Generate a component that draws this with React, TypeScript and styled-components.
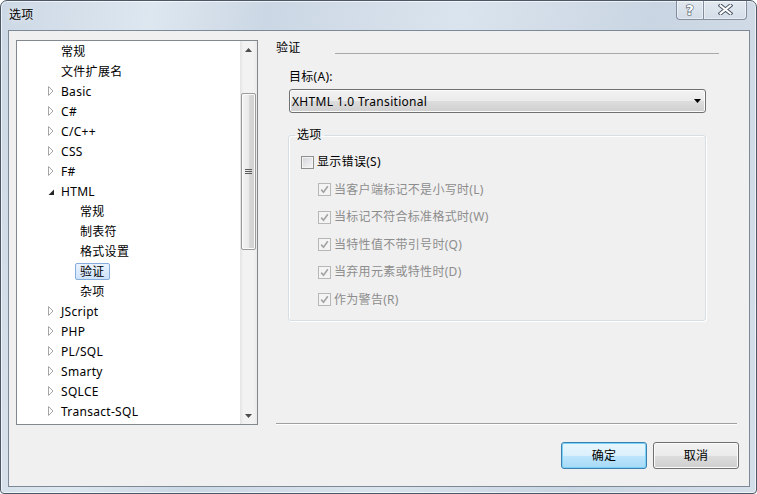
import React from 'react';
import styled, { createGlobalStyle } from 'styled-components';

const Global = createGlobalStyle`
  html, body { margin: 0; padding: 0; background: #ffffff; }
  body {
    font-family: "Noto Sans", "Noto Sans CJK SC", sans-serif;
    font-size: 12px;
    letter-spacing: 0.3px;
    color: #000;
  }
  * { box-sizing: border-box; }
`;

const Window = styled.div`
  width: 757px;
  height: 494px;
  border: 1px solid #4d5866;
  border-radius: 7px 7px 4px 4px;
  background: linear-gradient(100deg, #ccd8e5 0%, #dde7f0 18%, #cbd7e4 32%, #dae4ee 55%, #c9d5e2 78%, #d5dfea 100%);
  box-shadow: inset 0 0 0 1px rgba(255, 255, 255, 0.65);
  padding: 0 6px 6px 7px;
  display: flex;
  flex-direction: column;
  overflow: hidden;
`;

const TitleBar = styled.div`
  height: 29px;
  display: flex;
  justify-content: space-between;
  align-items: flex-start;
`;

const Title = styled.div`
  padding-left: 1px;
  line-height: 28px;
  font-size: 12px;
  color: #000;
  text-shadow: 0 0 6px rgba(255, 255, 255, 0.9);
`;

const CaptionGroup = styled.div`
  display: flex;
  margin-right: 3px;
  margin-top: -1px;
`;

const CaptionButton = styled.div<{ $w: number; $side: 'left' | 'right' }>`
  width: ${p => p.$w}px;
  height: 20px;
  border: 1px solid rgba(70, 85, 105, 0.6);
  border-top: none;
  ${p => (p.$side === 'left' ? 'border-right: none;' : '')}
  border-radius: ${p => (p.$side === 'left' ? '0 0 0 4px' : '0 0 4px 0')};
  background: linear-gradient(rgba(255, 255, 255, 0.45), rgba(255, 255, 255, 0.15));
  box-shadow: inset 0 0 0 1px rgba(255, 255, 255, 0.45);
  display: flex;
  align-items: center;
  justify-content: center;
`;

const Client = styled.div`
  flex: 1;
  border: 1px solid #7d8997;
  background: #f0f0f0;
  display: flex;
  flex-direction: column;
`;

const Main = styled.div`
  display: flex;
  gap: 18px;
  padding: 9px 12px 0 7px;
`;

const Tree = styled.div`
  width: 242px;
  height: 385px;
  border: 1px solid #828790;
  background: #fff;
  display: flex;
`;

const TreeList = styled.div`
  flex: 1;
  display: flex;
  flex-direction: column;
`;

const TreeRow = styled.div<{ $indent: number }>`
  height: 20px;
  display: flex;
  align-items: center;
  padding-left: ${p => p.$indent}px;
`;

const Expander = styled.span`
  width: 8px;
  height: 20px;
  display: flex;
  align-items: center;
`;

const TreeLabel = styled.span<{ $selected?: boolean }>`
  border: 1px solid ${p => (p.$selected ? '#84acdd' : 'transparent')};
  border-radius: 2px;
  padding: 0 4px;
  line-height: 15px;
  white-space: nowrap;
  background: ${p => (p.$selected ? 'linear-gradient(#eaf3fd, #cfe3fc)' : 'transparent')};
`;

const ScrollBar = styled.div`
  width: 17px;
  display: flex;
  flex-direction: column;
  background: linear-gradient(90deg, #e3e3e3 0%, #f2f2f2 20%, #f2f2f2 80%, #e9e9e9 100%);
`;

const ScrollArrow = styled.div`
  height: 17px;
  display: flex;
  align-items: center;
  justify-content: center;
`;

const ScrollTrack = styled.div`
  flex: 1;
  display: flex;
  flex-direction: column;
`;

const Thumb = styled.div`
  margin: 0 1px;
  border: 1px solid #9a9a9a;
  border-radius: 2px;
  background: linear-gradient(90deg, #f4f4f4 0%, #e9e9e9 50%, #d9d9d9 51%, #cfcfcf 100%);
  box-shadow: inset 0 0 0 1px #fbfbfb;
  display: flex;
  align-items: center;
  justify-content: center;
`;

const RightPanel = styled.div`
  flex: 1;
  height: 385px;
  display: flex;
  flex-direction: column;
`;

const SectionHeader = styled.div`
  height: 16px;
  display: flex;
  line-height: 16px;
`;

const HeaderLine = styled.div`
  flex: 1;
  align-self: flex-end;
  margin: 0 18px 2px 34px;
  border-top: 1px solid #a9a9a9;
`;

const FieldLabel = styled.div`
  margin: 13px 0 0 13px;
  line-height: 16px;
`;

const Combo = styled.div`
  margin: 4px 31px 0 13px;
  height: 24px;
  border: 1px solid #707070;
  border-radius: 3px;
  background: linear-gradient(#f2f2f2 0%, #ebebeb 50%, #dddddd 50%, #cfcfcf 100%);
  box-shadow: inset 0 0 0 1px #fbfbfb;
  display: flex;
  align-items: center;
  justify-content: space-between;
  padding: 0 4px 0 2px;
`;

const GroupBox = styled.fieldset`
  margin: 14px 31px 0 12px;
  padding: 11px 0 12px 0;
  border: 1px solid #d5dfe5;
  border-radius: 3px;
  box-shadow: inset 1px 1px 0 #ffffff, 1px 1px 0 #ffffff;
  display: flex;
  flex-direction: column;
  gap: 11.6px;
  min-width: 0;
`;

const Legend = styled.legend`
  margin-left: 6px;
  padding: 0 2px;
  line-height: 16px;
  font-size: 12px;
`;

const CheckRow = styled.label<{ $indent: number; $disabled?: boolean }>`
  height: 16px;
  display: flex;
  align-items: center;
  gap: 3px;
  margin-left: ${p => p.$indent}px;
  color: ${p => (p.$disabled ? '#8d8d8d' : '#000')};
  line-height: 16px;
`;

const CheckBox = styled.span<{ $disabled?: boolean }>`
  width: 13px;
  height: 13px;
  border: 1px solid ${p => (p.$disabled ? '#b7b7b7' : '#8e8f8f')};
  background: ${p => (p.$disabled ? '#f4f4f4' : 'linear-gradient(135deg, #d2d4d8 0%, #f7f7f7 100%)')};
  box-shadow: inset 0 0 0 1px #f4f4f4;
  display: flex;
  align-items: center;
  justify-content: center;
  flex: none;
`;

const Separator = styled.div`
  margin-top: auto;
  border-top: 1px solid #a0a0a0;
  border-bottom: 1px solid #ffffff;
`;

const ButtonBar = styled.div`
  display: flex;
  justify-content: flex-end;
  gap: 6px;
  padding: 17px 10px 0 0;
`;

const Button = styled.div<{ $default?: boolean }>`
  width: 86px;
  height: 27px;
  border: 1px solid ${p => (p.$default ? '#3c7fb1' : '#707070')};
  border-radius: 3px;
  background: ${p =>
    p.$default
      ? 'linear-gradient(#eaf6fd 0%, #d9f0fc 50%, #bee6fd 50%, #a7d9f5 100%)'
      : 'linear-gradient(#f2f2f2 0%, #ebebeb 50%, #dddddd 50%, #cfcfcf 100%)'};
  box-shadow: inset 0 0 0 1px ${p => (p.$default ? '#78d3f6' : '#fbfbfb')};
  display: flex;
  align-items: center;
  justify-content: center;
  line-height: 16px;
`;

type Node = {
  label: string;
  level: 0 | 1;
  arrow?: 'collapsed' | 'expanded';
  selected?: boolean;
};

const nodes: Node[] = [
  { label: '常规', level: 0 },
  { label: '文件扩展名', level: 0 },
  { label: 'Basic', level: 0, arrow: 'collapsed' },
  { label: 'C#', level: 0, arrow: 'collapsed' },
  { label: 'C/C++', level: 0, arrow: 'collapsed' },
  { label: 'CSS', level: 0, arrow: 'collapsed' },
  { label: 'F#', level: 0, arrow: 'collapsed' },
  { label: 'HTML', level: 0, arrow: 'expanded' },
  { label: '常规', level: 1 },
  { label: '制表符', level: 1 },
  { label: '格式设置', level: 1 },
  { label: '验证', level: 1, selected: true },
  { label: '杂项', level: 1 },
  { label: 'JScript', level: 0, arrow: 'collapsed' },
  { label: 'PHP', level: 0, arrow: 'collapsed' },
  { label: 'PL/SQL', level: 0, arrow: 'collapsed' },
  { label: 'Smarty', level: 0, arrow: 'collapsed' },
  { label: 'SQLCE', level: 0, arrow: 'collapsed' },
  { label: 'Transact-SQL', level: 0, arrow: 'collapsed' },
];

const options: { label: string; sub: boolean }[] = [
  { label: '显示错误(S)', sub: false },
  { label: '当客户端标记不是小写时(L)', sub: true },
  { label: '当标记不符合标准格式时(W)', sub: true },
  { label: '当特性值不带引号时(Q)', sub: true },
  { label: '当弃用元素或特性时(D)', sub: true },
  { label: '作为警告(R)', sub: true },
];

const ArrowIcon = ({ kind }: { kind: 'collapsed' | 'expanded' }) =>
  kind === 'collapsed' ? (
    <svg width="6" height="10" viewBox="0 0 6 10">
      <polygon points="0.5,0.5 5,5 0.5,9.5" fill="#fff" stroke="#a6a6a6" strokeWidth="1" />
    </svg>
  ) : (
    <svg width="7" height="7" viewBox="0 0 7 7" style={{ marginTop: 2 }}>
      <polygon points="6,0.5 6,6 0.5,6" fill="#262626" />
    </svg>
  );

const Check = () => (
  <svg width="9" height="9" viewBox="0 0 9 9">
    <path d="M1.2 4.6 L3.5 7.2 L7.8 1.2" fill="none" stroke="#a3a3a3" strokeWidth="1.6" />
  </svg>
);

export default function App() {
  return (
    <>
      <Global />
      <Window>
        <TitleBar>
          <Title>选项</Title>
          <CaptionGroup>
            <CaptionButton $w={27} $side="left">
              <svg width="12" height="14" viewBox="0 0 12 14">
                <text
                  x="6"
                  y="12"
                  textAnchor="middle"
                  fontSize="14"
                  fontWeight="bold"
                  fontFamily="DejaVu Sans, sans-serif"
                  fill="#ffffff"
                  stroke="#4a5665"
                  strokeWidth="1.2"
                  paintOrder="stroke"
                >
                  ?
                </text>
              </svg>
            </CaptionButton>
            <CaptionButton $w={44} $side="right">
              <svg width="15" height="11" viewBox="0 0 15 11">
                <path d="M2.5 1.5 L12.5 9.5 M12.5 1.5 L2.5 9.5" stroke="#4a5665" strokeWidth="4" strokeLinecap="square" />
                <path d="M2.5 1.5 L12.5 9.5 M12.5 1.5 L2.5 9.5" stroke="#ffffff" strokeWidth="2" strokeLinecap="square" />
              </svg>
            </CaptionButton>
          </CaptionGroup>
        </TitleBar>
        <Client>
          <Main>
            <Tree>
              <TreeList>
                {nodes.map((n, i) => (
                  <TreeRow key={i} $indent={n.level === 0 ? 31 : 58}>
                    {n.level === 0 && <Expander>{n.arrow && <ArrowIcon kind={n.arrow} />}</Expander>}
                    <TreeLabel $selected={n.selected}>{n.label}</TreeLabel>
                  </TreeRow>
                ))}
              </TreeList>
              <ScrollBar>
                <ScrollArrow>
                  <svg width="7" height="4" viewBox="0 0 7 4">
                    <polygon points="0,4 3.5,0 7,4" fill="#4d4d4d" />
                  </svg>
                </ScrollArrow>
                <ScrollTrack>
                  <Thumb style={{ marginTop: 35, height: 157 }}>
                    <svg width="7" height="7" viewBox="0 0 7 7">
                      <path d="M0 1.5 H7 M0 3.5 H7 M0 5.5 H7" stroke="#5a5a5a" strokeWidth="1" />
                    </svg>
                  </Thumb>
                </ScrollTrack>
                <ScrollArrow>
                  <svg width="7" height="4" viewBox="0 0 7 4">
                    <polygon points="0,0 3.5,4 7,0" fill="#4d4d4d" />
                  </svg>
                </ScrollArrow>
              </ScrollBar>
            </Tree>
            <RightPanel>
              <SectionHeader>
                <span>验证</span>
                <HeaderLine />
              </SectionHeader>
              <FieldLabel>目标(A):</FieldLabel>
              <Combo>
                <span>XHTML 1.0 Transitional</span>
                <svg width="7" height="4" viewBox="0 0 7 4">
                  <polygon points="0,0 3.5,4 7,0" fill="#000" />
                </svg>
              </Combo>
              <GroupBox>
                <Legend>选项</Legend>
                {options.map((o, i) => (
                  <CheckRow key={i} $indent={o.sub ? 29 : 12} $disabled={o.sub}>
                    <CheckBox $disabled={o.sub}>{o.sub && <Check />}</CheckBox>
                    <span>{o.label}</span>
                  </CheckRow>
                ))}
              </GroupBox>
              <Separator />
            </RightPanel>
          </Main>
          <ButtonBar>
            <Button $default>确定</Button>
            <Button>取消</Button>
          </ButtonBar>
        </Client>
      </Window>
    </>
  );
}
